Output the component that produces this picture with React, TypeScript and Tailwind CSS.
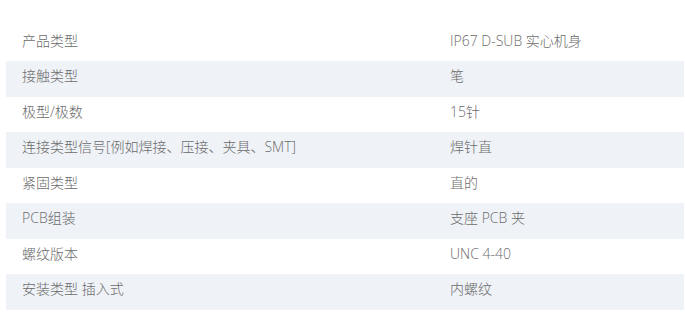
import React from "react";

const rows: [string, string][] = [
  ["产品类型", "IP67 D-SUB 实心机身"],
  ["接触类型", "笔"],
  ["极型/极数", "15针"],
  ["连接类型信号[例如焊接、压接、夹具、SMT]", "焊针直"],
  ["紧固类型", "直的"],
  ["PCB组装", "支座 PCB 夹"],
  ["螺纹版本", "UNC 4-40"],
  ["安装类型 插入式", "内螺纹"],
];

export default function App() {
  return (
    <div
      className="w-[685px] h-[316px] bg-white pt-[25.5px] pl-[6px] pr-[1px]"
      style={{ fontFamily: '"Open Sans", "Noto Sans CJK SC", sans-serif' }}
    >
      <table className="w-full border-collapse text-[14px] font-light leading-[19.5px] text-[#6b6b6b]">
        <tbody>
          {rows.map(([k, v], i) => (
            <tr key={i} className={i % 2 === 1 ? "bg-[#eff2f7]" : "bg-white"}>
              <td className="w-[428px] pt-[5px] pb-[11px] pl-4 pr-2 align-top">{k}</td>
              <td className="pt-[5px] pb-[11px] pl-4 pr-2 align-top">{v}</td>
            </tr>
          ))}
        </tbody>
      </table>
    </div>
  );
}
